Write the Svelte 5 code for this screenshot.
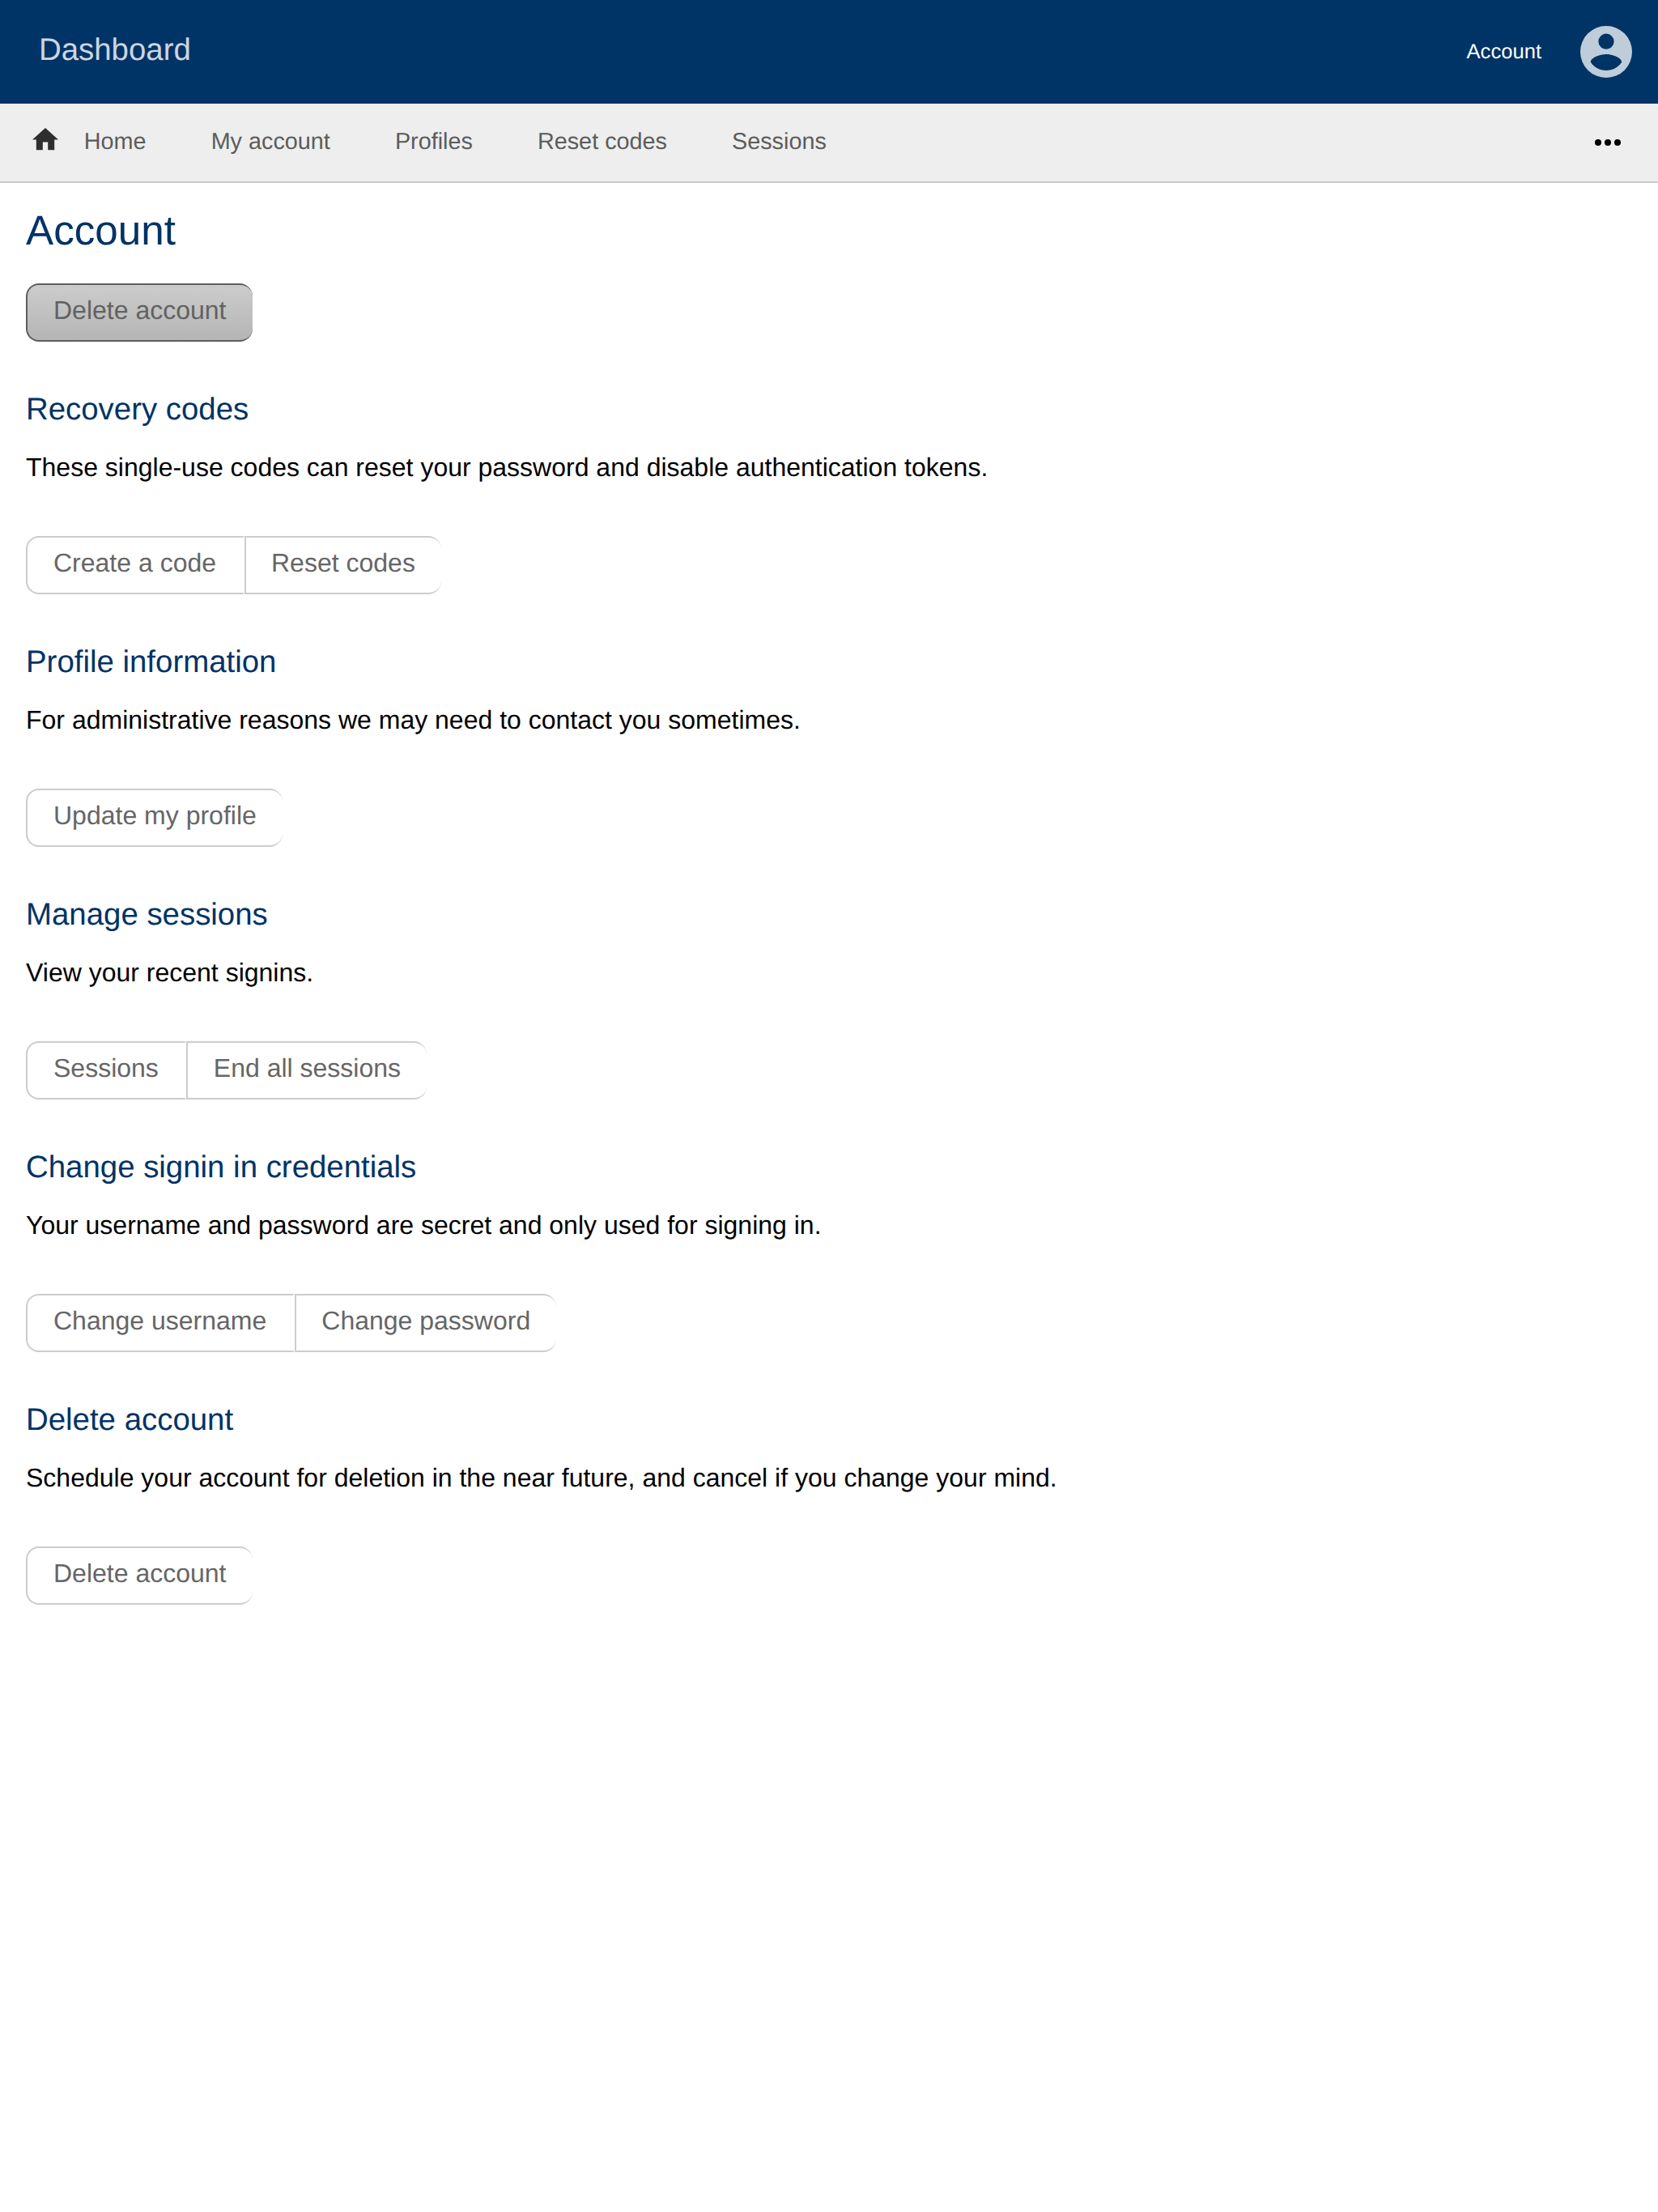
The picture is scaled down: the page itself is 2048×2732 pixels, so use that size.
<script>
  const links = ['Home', 'My account', 'Profiles', 'Reset codes', 'Sessions'];

  const sections = [
    {
      title: 'Recovery codes',
      text: 'These single-use codes can reset your password and disable authentication tokens.',
      actions: ['Create a code', 'Reset codes']
    },
    {
      title: 'Profile information',
      text: 'For administrative reasons we may need to contact you sometimes.',
      actions: ['Update my profile']
    },
    {
      title: 'Manage sessions',
      text: 'View your recent signins.',
      actions: ['Sessions', 'End all sessions']
    },
    {
      title: 'Change signin in credentials',
      text: 'Your username and password are secret and only used for signing in.',
      actions: ['Change username', 'Change password']
    },
    {
      title: 'Delete account',
      text: 'Schedule your account for deletion in the near future, and cancel if you change your mind.',
      actions: ['Delete account']
    }
  ];
</script>

<header class="topbar">
  <span class="brand">Dashboard</span>
  <div class="user">
    <span class="user-label">Account</span>
    <svg class="avatar" viewBox="2 2 20 20" aria-hidden="true">
      <path
        fill-rule="evenodd"
        d="M12 2a10 10 0 1 0 0 20a10 10 0 1 0 0-20zm0 3a3 3 0 1 1 0 6a3 3 0 1 1 0-6zM12 19.2c-2.5 0-4.71-1.28-6-3.22c.03-1.99 4-3.08 6-3.08s5.97 1.09 6 3.08c-1.29 1.94-3.5 3.22-6 3.22z"
      />
    </svg>
  </div>
</header>

<nav class="menu">
  <svg class="home" viewBox="2 3 20 17" aria-hidden="true">
    <path d="M10 20v-6h4v6h5v-8h3L12 3 2 12h3v8z" />
  </svg>
  {#each links as link}
    <a class="link" href="#top">{link}</a>
  {/each}
  <svg class="more" viewBox="0 0 32 8" aria-hidden="true">
    <circle cx="4" cy="4" r="4" />
    <circle cx="16" cy="4" r="4" />
    <circle cx="28" cy="4" r="4" />
  </svg>
</nav>

<main>
  <h1>Account</h1>
  <div class="group">
    <button class="active">Delete account</button>
  </div>
  {#each sections as section}
    <section>
      <h2>{section.title}</h2>
      <p>{section.text}</p>
      <div class="group">
        {#each section.actions as action}
          <button>{action}</button>
        {/each}
      </div>
    </section>
  {/each}
</main>

<style>
  :global(body) {
    background: #fff;
    color: #000;
    font: 32px/40px 'Liberation Sans', Arial, sans-serif;
    text-rendering: geometricPrecision;
  }

  .topbar {
    box-sizing: border-box;
    display: flex;
    align-items: center;
    justify-content: space-between;
    height: 128px;
    padding: 0 32px 0 48px;
    background: #003366;
  }

  .brand {
    padding-bottom: 4px;
    color: #ccd6e0;
    font-size: 38.4px;
    line-height: 44px;
  }

  .user {
    display: flex;
    align-items: center;
    gap: 48px;
  }

  .user-label {
    color: #fff;
    font-size: 25.6px;
    line-height: 32px;
  }

  .avatar {
    width: 64px;
    height: 64px;
    fill: #bfccd9;
  }

  .menu {
    display: flex;
    align-items: center;
    height: 96px;
    padding: 0 46px 0 40px;
    border-bottom: 2px solid #ccc;
    background: #eee;
  }

  .home {
    width: 32px;
    height: 27.2px;
    margin: 0 31.8px 8px 0;
    fill: #2e2e2e;
  }

  .link {
    margin-right: 80px;
    padding-bottom: 2px;
    color: #5c5c5c;
    font-size: 28.8px;
    line-height: 36px;
    text-decoration: none;
  }

  .more {
    width: 32px;
    height: 8px;
    margin-left: auto;
  }

  main {
    padding: 29px 32px;
  }

  h1,
  h2 {
    margin: 0;
    color: #003366;
    font-weight: 400;
  }

  h1 {
    margin-bottom: 35px;
    font-size: 51.2px;
    line-height: 60px;
  }

  section {
    margin-top: 62px;
  }

  h2 {
    font-size: 38.4px;
    line-height: 44px;
  }

  p {
    margin: 29px 0 65px;
  }

  .group {
    display: flex;
  }

  button {
    padding: 11px 32.6px 17px 32px;
    border: 2px solid #ccc;
    border-right-width: 0;
    background: #fff;
    color: #666;
    font: inherit;
    text-rendering: inherit;
  }

  button:first-child {
    border-top-left-radius: 16px;
    border-bottom-left-radius: 16px;
  }

  button:last-child {
    border-top-right-radius: 16px;
    border-bottom-right-radius: 16px;
  }

  button:not(:last-child) {
    padding-right: 32.6px;
    border-right: 2px solid transparent;
  }

  button:not(:first-child) {
    padding-right: 31.8px;
    padding-left: 31.4px;
  }

  .active {
    border-color: #5e5e5e;
    background: linear-gradient(#ccc, #b5b5b5);
    color: #626262;
  }
</style>
